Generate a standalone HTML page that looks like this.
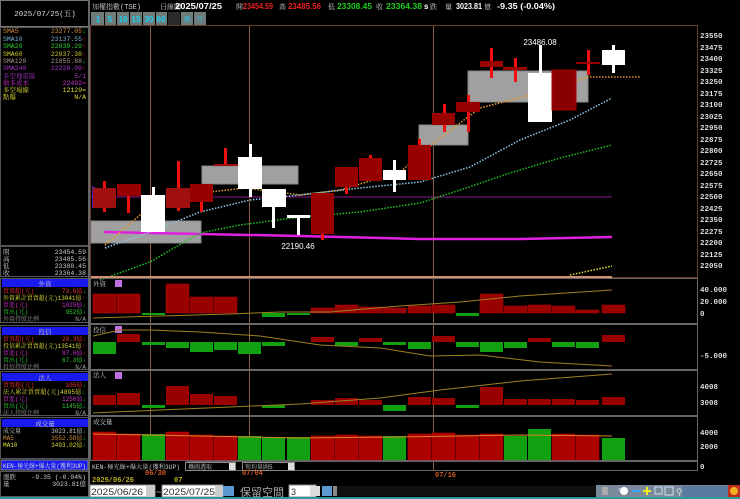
<!DOCTYPE html><html><head><meta charset="utf-8"><style>
html,body{margin:0;padding:0;background:#000;width:740px;height:499px;overflow:hidden}
svg{display:block}
text{font-family:"Liberation Mono","Noto Serif CJK SC",monospace}
</style></head><body>
<svg width="740" height="499" viewBox="0 0 740 499" xmlns="http://www.w3.org/2000/svg">
<rect width="740" height="499" fill="#000"/>
<!-- left panel -->
<rect x="0.5" y="0.5" width="88" height="26" fill="#000" stroke="#777"/>
<text x="45" y="16" font-size="7.5" fill="#ddd" text-anchor="middle">2025/07/25(五)</text>
<rect x="0.5" y="27.5" width="88" height="218" fill="#000" stroke="#555"/>
<g font-size="6.5">
<text x="3" y="33" fill="#d08a3a">SMA5</text><text x="86" y="33" fill="#d08a3a" text-anchor="end">23277.05<tspan fill="#2c2">↓</tspan></text>
<text x="3" y="41" fill="#7ab0d0">SMA10</text><text x="86" y="41" fill="#7ab0d0" text-anchor="end">23137.55<tspan fill="#e22">↑</tspan></text>
<text x="3" y="48" fill="#3c3">SMA20</text><text x="86" y="48" fill="#3c3" text-anchor="end">22839.29<tspan fill="#e22">↑</tspan></text>
<text x="3" y="56" fill="#cc3">SMA60</text><text x="86" y="56" fill="#cc3" text-anchor="end">22037.38<tspan fill="#e22">↑</tspan></text>
<text x="3" y="63" fill="#a98">SMA120</text><text x="86" y="63" fill="#a98" text-anchor="end">21855.88<tspan fill="#2c2">↓</tspan></text>
<text x="3" y="70" fill="#a3c">SMA240</text><text x="86" y="70" fill="#a3c" text-anchor="end">22228.09<tspan fill="#e22">↑</tspan></text>
<text x="3" y="78" fill="#a3c">多空地雷區</text><text x="86" y="78" fill="#a3c" text-anchor="end">5/1</text>
<text x="3" y="85" fill="#c3c">做多成本</text><text x="86" y="85" fill="#c3c" text-anchor="end">22492=</text>
<text x="3" y="92" fill="#dd3">多空場線</text><text x="86" y="92" fill="#dd3" text-anchor="end">12129=</text>
<text x="3" y="99" fill="#dd3">點曝</text><text x="86" y="99" fill="#dd3" text-anchor="end">N/A</text>
</g>
<rect x="0.5" y="246.5" width="88" height="30" fill="#000" stroke="#555"/>
<g font-size="6.5" fill="#ccc">
<text x="3" y="254">開</text><text x="86" y="254" text-anchor="end">23454.59</text>
<text x="3" y="261">高</text><text x="86" y="261" text-anchor="end">23485.56</text>
<text x="3" y="268">低</text><text x="86" y="268" text-anchor="end">23308.45</text>
<text x="3" y="275">收</text><text x="86" y="275" text-anchor="end">23364.38</text>
</g>
<!-- 外資 -->
<rect x="0.5" y="278.5" width="88" height="44" fill="#000" stroke="#555"/>
<rect x="2" y="279" width="86" height="8" fill="#1a1aee"/>
<text x="45" y="286" font-size="6.5" fill="#ccc" text-anchor="middle">外資</text>
<g font-size="6">
<text x="3" y="293" fill="#e33">買賣超(元)</text><text x="86" y="293" fill="#e33" text-anchor="end">73.6億<tspan fill="#2c2">↓</tspan></text>
<text x="3" y="300" fill="#dd3" textLength="82" lengthAdjust="spacingAndGlyphs">外資累計買賣超(元)13041億<tspan fill="#e22">↑</tspan></text>
<text x="3" y="307" fill="#c3c">買進(元)</text><text x="86" y="307" fill="#c3c" text-anchor="end">1025億<tspan fill="#2c2">↓</tspan></text>
<text x="3" y="314" fill="#3c3">賣出(元)</text><text x="86" y="314" fill="#3c3" text-anchor="end">952億<tspan fill="#2c2">↓</tspan></text>
<text x="3" y="321" fill="#999">外資持股比例</text><text x="86" y="321" fill="#999" text-anchor="end">N/A</text>
</g>
<!-- 投信 -->
<rect x="0.5" y="325.5" width="88" height="44" fill="#000" stroke="#555"/>
<rect x="2" y="327" width="86" height="8" fill="#1a1aee"/>
<text x="45" y="334" font-size="6.5" fill="#ccc" text-anchor="middle">投信</text>
<g font-size="6">
<text x="3" y="341" fill="#e33">買賣超(元)</text><text x="86" y="341" fill="#e33" text-anchor="end">20.3億<tspan fill="#e22">↑</tspan></text>
<text x="3" y="348" fill="#dd3" textLength="82" lengthAdjust="spacingAndGlyphs">投信累計買賣超(元)13541億<tspan fill="#e22">↑</tspan></text>
<text x="3" y="355" fill="#c3c">買進(元)</text><text x="86" y="355" fill="#c3c" text-anchor="end">87.6億<tspan fill="#e22">↑</tspan></text>
<text x="3" y="362" fill="#3c3">賣出(元)</text><text x="86" y="362" fill="#3c3" text-anchor="end">67.3億<tspan fill="#2c2">↓</tspan></text>
<text x="3" y="369" fill="#999">投信持股比例</text><text x="86" y="369" fill="#999" text-anchor="end">N/A</text>
</g>
<!-- 法人 -->
<rect x="0.5" y="371.5" width="88" height="44" fill="#000" stroke="#555"/>
<rect x="2" y="373" width="86" height="8" fill="#1a1aee"/>
<text x="45" y="380" font-size="6.5" fill="#ccc" text-anchor="middle">法人</text>
<g font-size="6">
<text x="3" y="387" fill="#e33">買賣超(元)</text><text x="86" y="387" fill="#e33" text-anchor="end">105億<tspan fill="#2c2">↓</tspan></text>
<text x="3" y="394" fill="#dd3" textLength="82" lengthAdjust="spacingAndGlyphs">法人累計買賣超(元)4895億<tspan fill="#2c2">↓</tspan></text>
<text x="3" y="401" fill="#c3c">買進(元)</text><text x="86" y="401" fill="#c3c" text-anchor="end">1250億<tspan fill="#2c2">↓</tspan></text>
<text x="3" y="408" fill="#3c3">賣出(元)</text><text x="86" y="408" fill="#3c3" text-anchor="end">1145億<tspan fill="#2c2">↓</tspan></text>
<text x="3" y="415" fill="#999">法人持股比例</text><text x="86" y="415" fill="#999" text-anchor="end">N/A</text>
</g>
<!-- 成交量 -->
<rect x="0.5" y="417.5" width="88" height="41" fill="#000" stroke="#555"/>
<rect x="2" y="419" width="86" height="8" fill="#1a1aee"/>
<text x="45" y="426" font-size="6.5" fill="#ccc" text-anchor="middle">成交量</text>
<g font-size="6">
<text x="3" y="433" fill="#ccc">成交量</text><text x="86" y="433" fill="#ccc" text-anchor="end">3023.81億<tspan fill="#2c2">↓</tspan></text>
<text x="3" y="440" fill="#d08a3a">MA5</text><text x="86" y="440" fill="#d08a3a" text-anchor="end">3552.58億<tspan fill="#2c2">↓</tspan></text>
<text x="3" y="447" fill="#dd3">MA10</text><text x="86" y="447" fill="#dd3" text-anchor="end">3493.02億<tspan fill="#2c2">↓</tspan></text>
</g>
<rect x="1" y="460" width="87" height="10" fill="#1a1aee" stroke="#888"/>
<text x="3" y="468" font-size="6" fill="#ddd" textLength="83" lengthAdjust="spacingAndGlyphs">KEN-極光線+爆大量(獲利3UP)</text>
<rect x="0.5" y="471.5" width="88" height="25" fill="#000" stroke="#555"/>
<g font-size="6.5" fill="#ccc"><text x="3" y="479">漲跌</text><text x="86" y="479" text-anchor="end">-9.35 (-0.04%)</text>
<text x="3" y="486">量</text><text x="86" y="486" text-anchor="end">3023.81億</text></g>
<rect x="88" y="0" width="2" height="497" fill="#666"/>

<!-- header -->
<g font-size="7">
<text x="92" y="9" fill="#ccc">加權指數(TSE)</text>
<text x="160" y="9" fill="#ccc">日線圖</text>
<text x="236" y="9" fill="#ccc">開</text>
<text x="279" y="9" fill="#ccc">高</text>
<text x="328" y="9" fill="#ccc">低</text>
<text x="376" y="9" fill="#ccc">收</text>
<text x="430" y="9" fill="#ccc">跌</text><text x="445" y="9" fill="#ccc">量</text>
<text x="484" y="9" fill="#ccc">億</text>
</g>
<g font-size="8" font-weight="bold" font-family="Liberation Sans" style="font-family:'Liberation Sans',sans-serif">
<text x="175" y="9" fill="#fff" textLength="47" lengthAdjust="spacingAndGlyphs" style="font-family:'Liberation Sans',sans-serif">2025/07/25</text>
<text x="243" y="9" fill="#e22" textLength="30" lengthAdjust="spacingAndGlyphs" style="font-family:'Liberation Sans',sans-serif">23454.59</text>
<text x="288" y="9" fill="#e22" textLength="33" lengthAdjust="spacingAndGlyphs" style="font-family:'Liberation Sans',sans-serif">23485.56</text>
<text x="337" y="9" fill="#2c2" textLength="35" lengthAdjust="spacingAndGlyphs" style="font-family:'Liberation Sans',sans-serif">23308.45</text>
<text x="386" y="9" fill="#2c2" textLength="36" lengthAdjust="spacingAndGlyphs" style="font-family:'Liberation Sans',sans-serif">23364.38</text>
<text x="424" y="9" fill="#fff" style="font-family:'Liberation Sans',sans-serif">s</text>
<text x="456" y="9" fill="#fff" textLength="26" lengthAdjust="spacingAndGlyphs" style="font-family:'Liberation Sans',sans-serif">3023.81</text>
<text x="497" y="9" fill="#fff" textLength="58" lengthAdjust="spacingAndGlyphs" style="font-family:'Liberation Sans',sans-serif">-9.35 (-0.04%)</text>
</g>
<rect x="91" y="12" width="115" height="13" fill="#6e7c7c"/>
<rect x="168" y="12" width="12" height="13" fill="#2a2a2a"/>
<g stroke="#000" stroke-width="1"><line x1="104.5" y1="12" x2="104.5" y2="25"/><line x1="116.5" y1="12" x2="116.5" y2="25"/><line x1="129.5" y1="12" x2="129.5" y2="25"/><line x1="142.5" y1="12" x2="142.5" y2="25"/><line x1="155.5" y1="12" x2="155.5" y2="25"/><line x1="167.5" y1="12" x2="167.5" y2="25"/><line x1="180.5" y1="12" x2="180.5" y2="25"/><line x1="193.5" y1="12" x2="193.5" y2="25"/></g>
<g font-size="8" font-weight="bold">
<text x="98" y="22" fill="#1ad0f0" text-anchor="middle" style="font-family:'Liberation Sans',sans-serif">1</text>
<text x="110" y="22" fill="#1ad0f0" text-anchor="middle" style="font-family:'Liberation Sans',sans-serif">5</text>
<text x="123" y="22" fill="#1ad0f0" text-anchor="middle" style="font-family:'Liberation Sans',sans-serif">10</text>
<text x="136" y="22" fill="#1ad0f0" text-anchor="middle" style="font-family:'Liberation Sans',sans-serif">15</text>
<text x="149" y="22" fill="#1ad0f0" text-anchor="middle" style="font-family:'Liberation Sans',sans-serif">30</text>
<text x="161" y="22" fill="#1ad0f0" text-anchor="middle" style="font-family:'Liberation Sans',sans-serif">60</text>
</g>
<text x="187" y="21" fill="#1ad0f0" font-size="6.5" text-anchor="middle">週</text>
<text x="200" y="21" fill="#1ad0f0" font-size="6.5" text-anchor="middle">月</text>

<!-- chart frame -->
<rect x="90.5" y="25.5" width="607" height="252" fill="none" stroke="#6a3a2a"/>
<g stroke="#8a5a3a" stroke-width="1"><line x1="150.5" y1="26" x2="150.5" y2="470"/><line x1="249.5" y1="26" x2="249.5" y2="470"/><line x1="433.5" y1="26" x2="433.5" y2="470"/></g>
<g fill="#a0a0a0" stroke="#888"><rect x="91" y="221" width="110" height="22"/><rect x="202" y="166" width="96" height="18"/><rect x="419" y="125" width="49" height="20"/><rect x="468" y="71" width="120" height="31"/></g>
<line x1="91" y1="197" x2="612" y2="197" stroke="#8a1a8a" stroke-width="1"/>
<path d="M104 232 L300 236 L420 239 L520 239 L612 237" stroke="#e020e0" stroke-width="2.5" fill="none"/>
<polygon points="92,186 92,208 117,197" fill="#5a1aa0"/>
<g fill="none" stroke-width="1.5" stroke-dasharray="1.5 1.5">
<path d="M105 245 L140 215 L170 200 L210 192 L245 188 L300 195 L340 190 L400 172 L440 138 L480 108 L530 95 L588 77 L640 77" stroke="#e89a30"/>
<path d="M105 248 L150 232 L200 212 L250 200 L300 195 L360 188 L420 182 L470 167 L520 140 L570 120 L612 98" stroke="#8cc8e8"/>
<path d="M100 280 L150 262 L200 233 L240 225 L300 217 L360 212 L420 203 L460 190 L510 173 L560 158 L612 145" stroke="#22c022"/>
<path d="M570 275 L612 266" stroke="#e0e020"/>
</g>
<g>
<rect x="103" y="181" width="3" height="31" fill="#f01010"/><rect x="93" y="188" width="23" height="20" fill="#a01010"/>
<rect x="127" y="190" width="3" height="23" fill="#f01010"/><rect x="117" y="184" width="24" height="12" fill="#900"/>
<rect x="152" y="187" width="3" height="45" fill="#fff"/><rect x="141" y="195" width="24" height="37" fill="#fff"/>
<rect x="177" y="161" width="3" height="50" fill="#f01010"/><rect x="166" y="188" width="24" height="20" fill="#a01010"/>
<rect x="200" y="184" width="3" height="28" fill="#f01010"/><rect x="190" y="184" width="23" height="18" fill="#900"/>
<rect x="224" y="148" width="3" height="18" fill="#f01010"/><rect x="214" y="164" width="24" height="2" fill="#a01010"/>
<rect x="249" y="144" width="3" height="53" fill="#fff"/><rect x="238" y="157" width="24" height="32" fill="#fff"/>
<rect x="272" y="189" width="3" height="39" fill="#fff"/><rect x="262" y="189" width="24" height="18" fill="#fff"/>
<rect x="297" y="215" width="3" height="20" fill="#fff"/><rect x="287" y="215" width="23" height="3" fill="#fff"/>
<rect x="321" y="193" width="3" height="47" fill="#f01010"/><rect x="311" y="193" width="23" height="41" fill="#900"/>
<rect x="345" y="167" width="3" height="27" fill="#f01010"/><rect x="335" y="167" width="23" height="20" fill="#900"/>
<rect x="369" y="155" width="3" height="4" fill="#f01010"/><rect x="359" y="158" width="23" height="23" fill="#900"/>
<rect x="393" y="160" width="3" height="32" fill="#fff"/><rect x="383" y="170" width="23" height="10" fill="#fff"/>
<rect x="418" y="139" width="3" height="8" fill="#f01010"/><rect x="408" y="145" width="23" height="35" fill="#900"/>
<rect x="443" y="104" width="3" height="28" fill="#f01010"/><rect x="432" y="113" width="23" height="12" fill="#900"/>
<rect x="467" y="95" width="3" height="37" fill="#f01010"/><rect x="456" y="102" width="24" height="10" fill="#900"/>
<rect x="490" y="48" width="3" height="30" fill="#f01010"/><rect x="480" y="61" width="23" height="6" fill="#900"/>
<rect x="514" y="58" width="3" height="24" fill="#f01010"/><rect x="503" y="67" width="24" height="3" fill="#900"/>
<rect x="539" y="45" width="3" height="28" fill="#fff"/><rect x="528" y="73" width="24" height="49" fill="#fff"/>
<rect x="552" y="70" width="24" height="40" fill="#800" stroke="#a00"/>
<rect x="587" y="50" width="3" height="25" fill="#f01010"/><rect x="576" y="62" width="24" height="2" fill="#900"/>
<rect x="612" y="45" width="3" height="28" fill="#fff"/><rect x="602" y="50" width="23" height="15" fill="#fff"/>
</g>
<text x="540" y="45" font-size="8" fill="#fff" text-anchor="middle" style="font-family:'Liberation Sans',sans-serif">23486.08</text>
<text x="298" y="249" font-size="8" fill="#fff" text-anchor="middle" style="font-family:'Liberation Sans',sans-serif">22190.46</text>
<line x1="91" y1="277" x2="612" y2="277" stroke="#d09070" stroke-width="2"/>
<g font-size="7.5" fill="#ddd" font-weight="bold" style="font-family:'Liberation Sans',sans-serif">
<text x="700" y="38">23550</text><text x="700" y="50">23475</text><text x="700" y="61">23400</text><text x="700" y="73">23325</text><text x="700" y="84">23250</text><text x="700" y="96">23175</text><text x="700" y="107">23100</text><text x="700" y="119">23025</text><text x="700" y="130">22950</text><text x="700" y="142">22875</text><text x="700" y="153">22800</text><text x="700" y="165">22725</text><text x="700" y="176">22650</text><text x="700" y="188">22575</text><text x="700" y="199">22500</text><text x="700" y="211">22425</text><text x="700" y="222">22350</text><text x="700" y="234">22275</text><text x="700" y="245">22200</text><text x="700" y="257">22125</text><text x="700" y="268">22050</text>
<text x="700" y="292">40.000</text><text x="700" y="304">20.000</text><text x="700" y="316">0</text>
<text x="700" y="358">-5.000</text>
<text x="700" y="389">4008</text><text x="700" y="405">3008</text>
<text x="700" y="435">4000</text><text x="700" y="449">2000</text><text x="700" y="469">0</text>
</g>
<g fill="none" stroke="#666"><rect x="90.5" y="278.5" width="607" height="45"/><rect x="90.5" y="324.5" width="607" height="45"/><rect x="90.5" y="370.5" width="607" height="45"/><rect x="90.5" y="416.5" width="607" height="44"/><rect x="90.5" y="461.5" width="607" height="9"/></g>
<g font-size="6.5" fill="#ccc"><text x="93" y="286">外資</text><text x="93" y="332">投信</text><text x="93" y="377">法人</text><text x="93" y="424">成交量</text></g>
<g fill="#c070e0"><rect x="115" y="280" width="7" height="7"/><rect x="115" y="326" width="7" height="7"/><rect x="115" y="372" width="7" height="7"/></g>
<g fill="#990000" stroke="#b00" stroke-width="0.5">
<rect x="93" y="294" width="23" height="19"/><rect x="117" y="294" width="23" height="19"/><rect x="166" y="284" width="23" height="29"/><rect x="190" y="297" width="23" height="16"/><rect x="214" y="297" width="23" height="16"/><rect x="311" y="308" width="23" height="5"/><rect x="335" y="305" width="23" height="8"/><rect x="359" y="307" width="23" height="6"/><rect x="383" y="308" width="23" height="5"/><rect x="408" y="306" width="23" height="7"/><rect x="432" y="305" width="23" height="8"/><rect x="480" y="294" width="23" height="19"/><rect x="504" y="306" width="23" height="7"/><rect x="528" y="305" width="23" height="8"/><rect x="552" y="306" width="23" height="7"/><rect x="576" y="310" width="23" height="3"/><rect x="602" y="305" width="23" height="8"/>
</g>
<g fill="#10a010"><rect x="142" y="313" width="23" height="2"/><rect x="262" y="313" width="23" height="4"/><rect x="287" y="313" width="23" height="2"/><rect x="456" y="313" width="23" height="3"/></g>
<path d="M93 318 L160 316 L230 314 L280 312 L330 312 L400 306 L460 302 L520 296 L612 290" stroke="#a08020" fill="none"/>
<g fill="#990000"><rect x="117" y="334" width="23" height="8"/><rect x="311" y="337" width="23" height="5"/><rect x="359" y="338" width="23" height="4"/><rect x="432" y="336" width="23" height="6"/><rect x="528" y="338" width="23" height="4"/><rect x="602" y="335" width="23" height="7"/></g>
<g fill="#10a010"><rect x="93" y="342" width="23" height="12"/><rect x="142" y="342" width="23" height="3"/><rect x="166" y="342" width="23" height="6"/><rect x="190" y="342" width="23" height="10"/><rect x="214" y="342" width="23" height="8"/><rect x="238" y="342" width="23" height="12"/><rect x="262" y="342" width="23" height="4"/><rect x="335" y="342" width="23" height="4"/><rect x="383" y="342" width="23" height="3"/><rect x="408" y="342" width="23" height="7"/><rect x="456" y="342" width="23" height="5"/><rect x="480" y="342" width="23" height="10"/><rect x="504" y="342" width="23" height="6"/><rect x="552" y="342" width="23" height="5"/><rect x="576" y="342" width="23" height="6"/></g>
<path d="M93 336 L120 330 L150 330 L200 332 L260 336 L320 345 L380 348 L430 356 L480 355 L540 362 L612 366" stroke="#a08020" fill="none"/>
<g fill="#990000"><rect x="93" y="395" width="23" height="10"/><rect x="117" y="393" width="23" height="12"/><rect x="166" y="386" width="23" height="19"/><rect x="190" y="394" width="23" height="11"/><rect x="214" y="396" width="23" height="9"/><rect x="311" y="400" width="23" height="5"/><rect x="335" y="398" width="23" height="7"/><rect x="359" y="400" width="23" height="5"/><rect x="408" y="397" width="23" height="8"/><rect x="432" y="398" width="23" height="7"/><rect x="480" y="387" width="23" height="18"/><rect x="504" y="399" width="23" height="6"/><rect x="528" y="399" width="23" height="6"/><rect x="552" y="399" width="23" height="6"/><rect x="576" y="400" width="23" height="5"/><rect x="602" y="397" width="23" height="8"/></g>
<g fill="#10a010"><rect x="142" y="405" width="23" height="3"/><rect x="262" y="405" width="23" height="3"/><rect x="383" y="405" width="23" height="6"/><rect x="456" y="405" width="23" height="3"/></g>
<path d="M93 413 L160 410 L230 407 L300 404 L380 398 L440 390 L520 381 L612 374" stroke="#a08020" fill="none"/>
<g fill="#aa0000" stroke="#c00" stroke-width="0.5"><rect x="93" y="432" width="23" height="28"/><rect x="117" y="434" width="23" height="26"/><rect x="166" y="432" width="23" height="28"/><rect x="190" y="435" width="23" height="25"/><rect x="214" y="436" width="23" height="24"/><rect x="311" y="436" width="23" height="24"/><rect x="335" y="435" width="23" height="25"/><rect x="359" y="436" width="23" height="24"/><rect x="408" y="434" width="23" height="26"/><rect x="432" y="433" width="23" height="27"/><rect x="456" y="435" width="23" height="25"/><rect x="480" y="434" width="23" height="26"/><rect x="552" y="434" width="23" height="26"/><rect x="576" y="435" width="23" height="25"/></g>
<g fill="#10a010"><rect x="142" y="434" width="23" height="26"/><rect x="238" y="436" width="23" height="24"/><rect x="262" y="437" width="23" height="23"/><rect x="287" y="437" width="23" height="23"/><rect x="383" y="436" width="23" height="24"/><rect x="504" y="436" width="23" height="24"/><rect x="528" y="429" width="23" height="31"/><rect x="602" y="438" width="23" height="22"/></g>
<path d="M93 434 L200 436 L300 438 L400 437 L460 436 L520 435 L612 436" stroke="#e08020" fill="none"/>
<!-- bottom -->
<rect x="90" y="461" width="96" height="10" fill="#000"/>
<text x="92" y="469" font-size="6" fill="#ccc" textLength="88" lengthAdjust="spacingAndGlyphs">KEN-極光線+爆大量(獲利3UP)</text>
<rect x="185.5" y="462.5" width="50" height="8" fill="#000" stroke="#888"/><text x="188" y="469" font-size="6" fill="#ccc">疊圖選取</text><rect x="229" y="463" width="6" height="7" fill="#ddd"/>
<rect x="242.5" y="462.5" width="52" height="8" fill="#000" stroke="#888"/><text x="245" y="469" font-size="6" fill="#ccc">短均量圖5</text><rect x="288" y="463" width="6" height="7" fill="#ddd"/>
<g font-size="7" font-weight="bold" style="font-family:'Liberation Sans',sans-serif">
<text x="92" y="482" fill="#bbb020">2025/06/26</text><text x="145" y="475" fill="#d05a20">06/30</text><text x="174" y="482" fill="#bbb020">07</text><text x="242" y="475" fill="#d05a20">07/04</text><text x="435" y="477" fill="#d05a20">07/16</text>
</g>
<rect x="90" y="484" width="650" height="13" fill="#000"/>
<rect x="90" y="485" width="65" height="12" fill="#fff" stroke="#888"/><text x="91" y="495" font-size="9" fill="#333" textLength="52" lengthAdjust="spacingAndGlyphs" style="font-family:'Liberation Sans',sans-serif">2025/06/26</text><rect x="146" y="486" width="8" height="10" fill="#ccc"/>
<text x="156" y="495" font-size="9" fill="#ccc">~</text>
<rect x="162" y="485" width="61" height="12" fill="#fff" stroke="#888"/><text x="163" y="495" font-size="9" fill="#333" textLength="52" lengthAdjust="spacingAndGlyphs" style="font-family:'Liberation Sans',sans-serif">2025/07/25</text><rect x="215" y="486" width="8" height="10" fill="#ccc"/>
<rect x="223" y="486" width="11" height="10" fill="#5a9ad0"/>
<text x="240" y="496" font-size="11" fill="#aaa" style="font-family:'Noto Sans CJK SC',sans-serif">保留空間</text>
<rect x="289" y="485" width="27" height="12" fill="#fff" stroke="#888"/><text x="291" y="495" font-size="9" fill="#333" style="font-family:'Liberation Sans',sans-serif">3</text><rect x="310" y="486" width="10" height="10" fill="#ddd"/>
<rect x="322" y="486" width="10" height="10" fill="#5a9ad0"/>
<rect x="333" y="486" width="4" height="10" fill="#888"/>
<rect x="337" y="486" width="260" height="10" fill="#111"/>
<rect x="596" y="485" width="144" height="12" fill="#7a8a9a"/>
<g fill="#cde"><rect x="602" y="487" width="6" height="8" fill="#aaa"/><text x="617" y="495" font-size="9">↖</text><circle cx="624" cy="491" r="4" fill="#fff"/><rect x="632" y="490" width="8" height="2" fill="#3af"/><rect x="643" y="490" width="8" height="2" fill="#ee2"/><rect x="646" y="487" width="2" height="8" fill="#ee2"/><rect x="655" y="487" width="7" height="7" fill="none" stroke="#cde"/><rect x="665" y="487" width="8" height="8" fill="none" stroke="#cde"/><text x="676" y="495" font-size="9">⚲</text></g>
<rect x="682" y="486" width="58" height="11" fill="#5a7aa0"/>
<rect x="728" y="485" width="12" height="12" fill="#c03020"/><circle cx="734" cy="491" r="4" fill="#f0b020"/>
<rect x="0" y="497" width="740" height="2" fill="#2a9a9a"/>
</svg>
</body></html>
